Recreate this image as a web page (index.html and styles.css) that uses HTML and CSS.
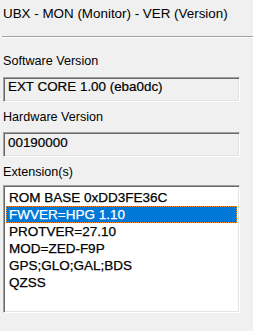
FILE: index.html
```html
<!DOCTYPE html>
<html lang="en">
<head>
  <meta charset="UTF-8" />
  <title>UBX - MON - VER</title>
  <link rel="stylesheet" href="styles.css">
</head>
<body>
  <div class="panel">
    <div class="title">UBX - MON (Monitor) - VER (Version)</div>
    <div class="sep"></div>

    <div class="field">
      <div class="label first">Software Version</div>
      <div class="box">EXT CORE 1.00 (eba0dc)</div>
    </div>

    <div class="field">
      <div class="label">Hardware Version</div>
      <div class="box hw">00190000</div>
    </div>

    <div class="field">
      <div class="label ext">Extension(s)</div>
      <ul class="listbox">
        <li>ROM BASE 0xDD3FE36C</li>
        <li class="selected">FWVER=HPG 1.10</li>
        <li>PROTVER=27.10</li>
        <li>MOD=ZED-F9P</li>
        <li>GPS;GLO;GAL;BDS</li>
        <li>QZSS</li>
      </ul>
    </div>
  </div>
</body>
</html>
```

FILE: styles.css
```css
body {
  margin: 0;
  background: #f0f0f0;
  font-family: "Liberation Sans", Arial, sans-serif;
  color: #000;
}

.panel {
  width: 253px;
  height: 331px;
  overflow: hidden;
}

.title {
  padding: 5px 0 0 3px;
  font-family: "Liberation Sans Narrow", "Liberation Sans", sans-serif;
  font-size: 13.4px;
  line-height: 18px;
}

.sep {
  margin: 13px 0 0 2px;
  border-top: 1px solid #a0a0a0;
  border-bottom: 1px solid #fff;
}

.field {
  padding-left: 3px;
  width: 237px;
}

.label {
  font-size: 12.6px;
  line-height: 15px;
  margin: 8px 0 7px;
}

.label.first {
  margin: 16px 0 8px;
}

.label.ext {
  margin-bottom: 5px;
}

.box {
  height: 25px;
  box-sizing: border-box;
  border-top: 1px solid #a0a0a0;
  border-left: 1px solid #a0a0a0;
  border-right: 1px solid #fff;
  border-bottom: 1px solid #fff;
  box-shadow: inset 1px 1px 0 #696969, inset -1px -1px 0 #e3e3e3;
  background: #f0f0f0;
  font-size: 13.4px;
  line-height: 18px;
  padding-left: 4px;
  -webkit-text-stroke: 0.2px #000;
}

.box.hw {
  line-height: 19px;
}

.listbox {
  list-style: none;
  margin: 0;
  padding: 3px 2px 0 2px;
  height: 128px;
  box-sizing: border-box;
  border-top: 1px solid #a0a0a0;
  border-left: 1px solid #a0a0a0;
  border-right: 1px solid #fff;
  border-bottom: 1px solid #fff;
  box-shadow: inset 1px 1px 0 #696969, inset -1px -1px 0 #e3e3e3;
  background: #fff;
  font-size: 13.5px;
  -webkit-text-stroke: 0.25px currentColor;
}

.listbox li {
  height: 17px;
  line-height: 17px;
  padding-left: 3px;
  box-sizing: border-box;
}

.listbox li.selected {
  background: #0078d7;
  color: #fff;
  outline: 1px dotted #ff8c1a;
  outline-offset: -1px;
}
```
